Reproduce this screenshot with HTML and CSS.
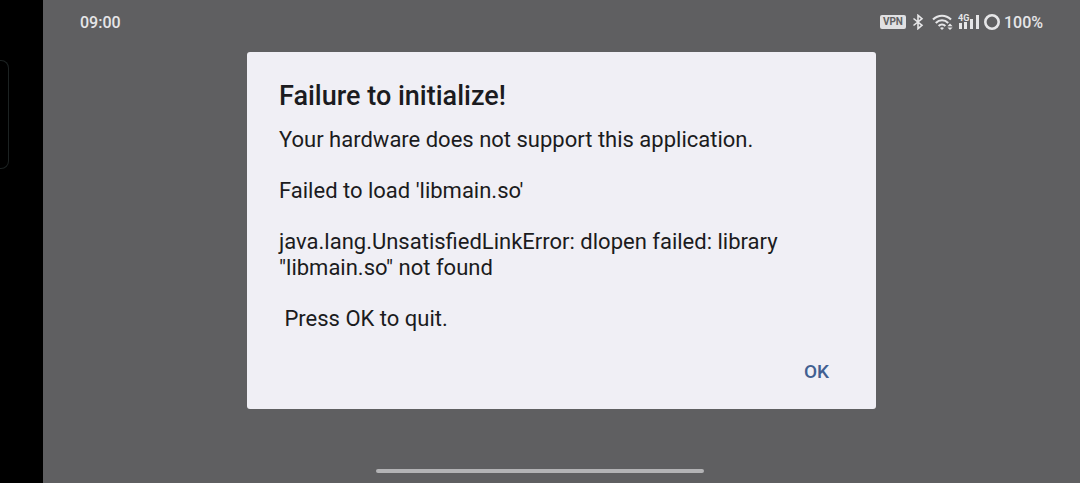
FILE: index.html
```
<!DOCTYPE html>
<html lang="en">
<head>
  <meta charset="UTF-8">
  <title>Failure to initialize!</title>
  <meta name="viewport" content="width=device-width, initial-scale=1.0">
  <link rel="stylesheet" href="styles.css">
</head>
<body>
  <div class="cutout">
    <div class="edge-panel"></div>
  </div>

  <div class="screen">
    <header class="status-bar">
      <time class="clock">09:00</time>
      <div class="status-icons">
        <span class="vpn">VPN</span>
        <svg class="bluetooth" width="12" height="16" viewBox="0 0 12 16" fill="none" stroke="currentColor" stroke-width="1.6">
          <path d="M1.5 4.5L10 11.3L6 14.7V1.3L10 4.7L1.5 11.5"/>
        </svg>
        <svg class="wifi" width="22" height="16" viewBox="0 0 22 16">
          <g fill="none" stroke="currentColor" stroke-width="2.1">
            <path d="M1 5.6C6.2 0.5 13.8 0.5 19 5.6"/>
            <path d="M3.8 8.9C7.4 5.3 12.6 5.3 16.2 8.9"/>
            <path d="M6.6 12C8.6 10 11.4 10 13.4 12"/>
          </g>
          <path fill="currentColor" d="M8 14Q10 12.4 12 14L10 16Z"/>
          <path fill="currentColor" d="M18 9.6L20.6 12.2H15.4ZM18 16L15.4 13.4H20.6Z"/>
        </svg>
        <svg class="signal" width="22" height="16" viewBox="0 0 22 16" fill="currentColor">
          <text class="signal-type" x="0" y="7">4G</text>
          <rect x="1" y="9" width="3" height="6"/>
          <rect x="6" y="8" width="3" height="7"/>
          <rect x="12" y="5" width="3" height="10"/>
          <rect x="18" y="1" width="3" height="14"/>
        </svg>
        <svg class="battery" width="18" height="18" viewBox="0 0 18 18">
          <circle cx="9" cy="9" r="6.7" fill="none" stroke="currentColor" stroke-width="2.6"/>
        </svg>
        <span class="percent">100%</span>
      </div>
    </header>

    <main class="dialog" role="alertdialog" aria-labelledby="title" aria-describedby="message">
      <h1 id="title">Failure to initialize!</h1>
      <div class="message" id="message">
        <p>Your hardware does not support this application.</p>
        <p>Failed to load 'libmain.so'</p>
        <p>java.lang.UnsatisfiedLinkError: dlopen failed: library "libmain.so" not found</p>
        <p>&nbsp;Press OK to quit.</p>
      </div>
      <div class="actions">
        <button type="button">OK</button>
      </div>
    </main>
  </div>

  <div class="nav-handle"></div>
</body>
</html>
```
FILE: styles.css
```
* {
  box-sizing: border-box;
}
body {
  display: flex;
  min-height: 100vh;
  margin: 0;
  font-family: Roboto, sans-serif;
  background: #5f5f61;
  color: #1b1b20;
}
.cutout {
  flex: none;
  width: 43px;
  padding-top: 60px;
  background: #000;
}
.edge-panel {
  width: 9px;
  height: 109px;
  border: 1px solid #1c2222;
  border-left: none;
  border-radius: 0 8px 8px 0;
}
.screen {
  flex: 1;
}
.status-bar {
  display: flex;
  justify-content: space-between;
  align-items: center;
  height: 44px;
  padding: 0 37px;
  font-size: 16px;
  font-weight: 500;
  color: #e6e6e8;
}
.status-icons {
  display: flex;
  align-items: center;
}
.status-icons svg {
  display: block;
}
.vpn {
  padding: 0 3px;
  border-radius: 2px;
  background: #e0e0e2;
  color: #5f5f61;
  font-size: 10px;
  font-weight: 700;
  line-height: 14px;
}
.bluetooth {
  margin-left: 6px;
}
.wifi {
  margin-left: 8px;
}
.signal {
  margin-left: 4px;
}
.signal-type {
  font-size: 9px;
  font-weight: 700;
}
.battery {
  margin-left: 3px;
}
.percent {
  margin-left: 3px;
}
.dialog {
  max-width: 629px;
  margin: 8px auto 0;
  padding: 28px 32px 17px;
  border-radius: 3px;
  background: #f0eff5;
}
h1 {
  margin: 0 0 15px;
  font-size: 27px;
  font-weight: 500;
  line-height: 32px;
}
.message {
  font-size: 22px;
  line-height: 26px;
}
.message p {
  margin: 0 0 25px;
}
.message p:last-child {
  margin-bottom: 20px;
}
.actions {
  display: flex;
  justify-content: flex-end;
}
button {
  padding: 8px 15px;
  border: none;
  background: none;
  color: #415f91;
  font-family: inherit;
  font-size: 19px;
  font-weight: 500;
  line-height: 24px;
  cursor: pointer;
}
/* gesture bar, centered on the whole display */
.nav-handle {
  position: absolute;
  bottom: 10px;
  left: 50%;
  width: 328px;
  height: 4px;
  border-radius: 2px;
  background: #b3b3b5;
  transform: translateX(-50%);
}
```
